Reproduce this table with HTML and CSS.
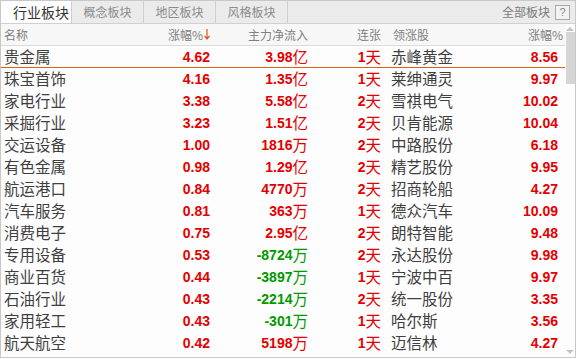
FILE: index.html
```html
<!DOCTYPE html>
<html lang="zh">
<head>
<meta charset="utf-8">
<link rel="stylesheet" href="styles.css">
</head>
<body>
<div class="panel">
  <div class="tabs">
    <div class="tab active">行业板块</div>
    <div class="tab">概念板块</div>
    <div class="tab">地区板块</div>
    <div class="tab">风格板块</div>
    <div class="spacer"></div>
    <div class="all">全部板块</div>
    <div class="help">?</div>
  </div>
  <div class="main">
    <div class="table">
      <div class="row head">
        <span class="c name">名称</span>
        <span class="c r">涨幅%<svg class="sort" width="6" height="11" viewBox="0 0 6 11"><path d="M3 0V10M0.5 7L3 10L5.5 7" fill="none" stroke="#e0581c" stroke-width="1.2"/></svg></span>
        <span class="c r">主力净流入</span>
        <span class="c r">连张</span>
        <span class="c lead">领涨股</span>
        <span class="c r last">涨幅%</span>
      </div>
      <div class="row sel"><span class="c name">贵金属</span><span class="c r num red">4.62</span><span class="c r red"><b>3.98</b>亿</span><span class="c r red"><b>1</b>天</span><span class="c lead">赤峰黄金</span><span class="c r num red">8.56</span></div>
      <div class="row"><span class="c name">珠宝首饰</span><span class="c r num red">4.16</span><span class="c r red"><b>1.35</b>亿</span><span class="c r red"><b>1</b>天</span><span class="c lead">莱绅通灵</span><span class="c r num red">9.97</span></div>
      <div class="row"><span class="c name">家电行业</span><span class="c r num red">3.38</span><span class="c r red"><b>5.58</b>亿</span><span class="c r red"><b>2</b>天</span><span class="c lead">雪祺电气</span><span class="c r num red">10.02</span></div>
      <div class="row"><span class="c name">采掘行业</span><span class="c r num red">3.23</span><span class="c r red"><b>1.51</b>亿</span><span class="c r red"><b>2</b>天</span><span class="c lead">贝肯能源</span><span class="c r num red">10.04</span></div>
      <div class="row"><span class="c name">交运设备</span><span class="c r num red">1.00</span><span class="c r red"><b>1816</b>万</span><span class="c r red"><b>2</b>天</span><span class="c lead">中路股份</span><span class="c r num red">6.18</span></div>
      <div class="row"><span class="c name">有色金属</span><span class="c r num red">0.98</span><span class="c r red"><b>1.29</b>亿</span><span class="c r red"><b>2</b>天</span><span class="c lead">精艺股份</span><span class="c r num red">9.95</span></div>
      <div class="row"><span class="c name">航运港口</span><span class="c r num red">0.84</span><span class="c r red"><b>4770</b>万</span><span class="c r red"><b>2</b>天</span><span class="c lead">招商轮船</span><span class="c r num red">4.27</span></div>
      <div class="row"><span class="c name">汽车服务</span><span class="c r num red">0.81</span><span class="c r red"><b>363</b>万</span><span class="c r red"><b>1</b>天</span><span class="c lead">德众汽车</span><span class="c r num red">10.09</span></div>
      <div class="row"><span class="c name">消费电子</span><span class="c r num red">0.75</span><span class="c r red"><b>2.95</b>亿</span><span class="c r red"><b>2</b>天</span><span class="c lead">朗特智能</span><span class="c r num red">9.48</span></div>
      <div class="row"><span class="c name">专用设备</span><span class="c r num red">0.53</span><span class="c r green"><b>-8724</b>万</span><span class="c r red"><b>2</b>天</span><span class="c lead">永达股份</span><span class="c r num red">9.98</span></div>
      <div class="row"><span class="c name">商业百货</span><span class="c r num red">0.44</span><span class="c r green"><b>-3897</b>万</span><span class="c r red"><b>1</b>天</span><span class="c lead">宁波中百</span><span class="c r num red">9.97</span></div>
      <div class="row"><span class="c name">石油行业</span><span class="c r num red">0.43</span><span class="c r green"><b>-2214</b>万</span><span class="c r red"><b>2</b>天</span><span class="c lead">统一股份</span><span class="c r num red">3.35</span></div>
      <div class="row"><span class="c name">家用轻工</span><span class="c r num red">0.43</span><span class="c r green"><b>-301</b>万</span><span class="c r red"><b>1</b>天</span><span class="c lead">哈尔斯</span><span class="c r num red">3.56</span></div>
      <div class="row"><span class="c name">航天航空</span><span class="c r num red">0.42</span><span class="c r red"><b>5198</b>万</span><span class="c r red"><b>1</b>天</span><span class="c lead">迈信林</span><span class="c r num red">4.27</span></div>
    </div>
    <div class="scroll">
      <div class="arrow up"></div>
      <div class="thumb"></div>
      <div class="arrow down"></div>
    </div>
  </div>
</div>
</body>
</html>
```
FILE: styles.css
```css
html, body {
  margin: 0;
  padding: 0;
  background: #ffffff;
}
body {
  font-family: "Noto Sans CJK SC", "Liberation Sans", sans-serif;
}
.panel {
  width: 576px;
  height: 358px;
  box-sizing: border-box;
  border: 1px solid #c8c8c8;
  display: flex;
  flex-direction: column;
  background: #fdfdfd;
}
.tabs {
  display: flex;
  height: 23px;
  flex: none;
  box-sizing: border-box;
  border-bottom: 1px solid #d0d0d0;
  background: #ebebeb;
  align-items: stretch;
}
.tab {
  width: 71px;
  border-right: 1px solid #d0d0d0;
  display: flex;
  align-items: center;
  justify-content: center;
  font-size: 12px;
  color: #8c8c8c;
  line-height: 1;
}
.tab.active {
  background: #ffffff;
  font-size: 14px;
  color: #333333;
  justify-content: flex-start;
  padding-left: 12px;
  box-sizing: border-box;
}
.spacer {
  flex: 1;
}
.all {
  align-self: center;
  font-size: 12px;
  color: #7a7a7a;
  line-height: 1;
  margin-right: 5px;
}
.help {
  align-self: center;
  width: 15px;
  height: 15px;
  box-sizing: border-box;
  border: 1px solid #a8a8a8;
  background: #f2f2f2;
  color: #888888;
  font-family: "Liberation Sans", sans-serif;
  font-size: 11px;
  line-height: 13px;
  text-align: center;
  margin-right: 5px;
}
.main {
  flex: 1;
  display: flex;
  min-height: 0;
}
.table {
  width: 564px;
  display: flex;
  flex-direction: column;
}
.row {
  display: grid;
  grid-template-columns: 149px 60px 98px 73px 99px 78px 7px;
  height: 22px;
  align-items: center;
  box-sizing: border-box;
  font-size: 15.5px;
  color: #3f3f3f;
  line-height: 1;
}
.row.head {
  background: #f7f7f7;
  border-bottom: 1px solid #dcdcdc;
  font-size: 12px;
  color: #808080;
}
.row.sel {
  border-bottom: 1px solid #dc5f1c;
}
.c {
  white-space: nowrap;
}
.name {
  padding-left: 3px;
}
.r {
  text-align: right;
  display: flex;
  justify-content: flex-end;
  align-items: center;
}
.lead {
  padding-left: 10px;
}
.head .lead {
  padding-left: 12px;
}
.head .last {
  margin-right: -5px;
}
.sort {
  margin-left: 1px;
  margin-bottom: 1px;
}
.num, b {
  font-family: "Liberation Sans", sans-serif;
  font-weight: bold;
  font-size: 14px;
}
.red {
  color: #e40000;
}
.green {
  color: #009a00;
}
.scroll {
  width: 10px;
  display: flex;
  flex-direction: column;
  align-items: center;
  padding: 3px 0 3px;
  box-sizing: border-box;
}
.arrow {
  width: 0;
  height: 0;
  border-left: 4px solid transparent;
  border-right: 4px solid transparent;
}
.arrow.up {
  border-bottom: 4px solid #c4c4c4;
}
.arrow.down {
  border-top: 4px solid #c4c4c4;
  margin-top: auto;
}
.thumb {
  width: 9px;
  height: 52px;
  margin-top: 1px;
  background: #d6d6d6;
}
```
